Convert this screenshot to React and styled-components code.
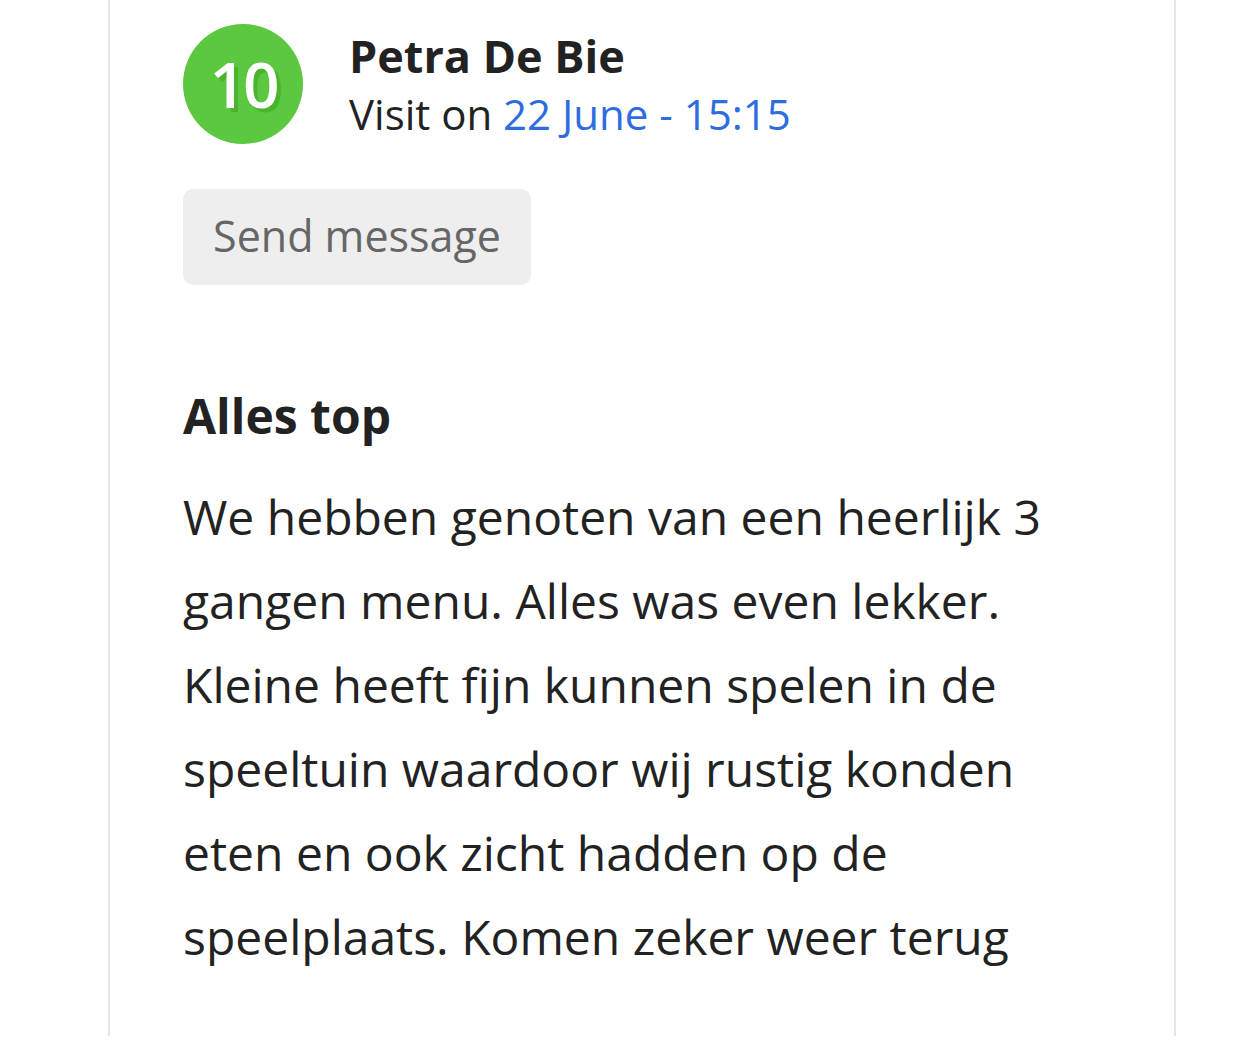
import React from "react";
import styled, { createGlobalStyle } from "styled-components";

const Global = createGlobalStyle`
  html, body { margin: 0; padding: 0; background: #fff; }
  body { font-family: "Open Sans", "Noto Sans", sans-serif; color: #222; }
`;

const Card = styled.div`
  box-sizing: border-box;
  margin-left: 108px;
  width: 1068px;
  height: 1036px;
  border-left: 2px solid #e6e6e6;
  border-right: 2px solid #e6e6e6;
  padding: 24px 0 0 73px;
`;

const Header = styled.div`
  display: flex;
  align-items: flex-start;
  gap: 46px;
`;

const Score = styled.div`
  width: 120px;
  height: 120px;
  border-radius: 50%;
  background: #5cc840;
  color: #fff;
  display: flex;
  align-items: center;
  justify-content: center;
  font-size: 64px;
  font-weight: 600;
  letter-spacing: -3px;
  text-shadow: 4px 4px 0 #4ab42e;
  flex-shrink: 0;
  padding-bottom: 2px;
  box-sizing: border-box;
`;

const Info = styled.div`
  display: flex;
  flex-direction: column;
  padding-top: 3px;
`;

const Name = styled.div`
  font-size: 45px;
  font-weight: 700;
  line-height: 58px;
  color: #222;
`;

const Visit = styled.div`
  font-size: 42px;
  line-height: 58px;
  color: #222;
`;

const DateLink = styled.span`
  color: #2d6de0;
`;

const Button = styled.button`
  margin-top: 45px;
  box-sizing: border-box;
  width: 348px;
  height: 96px;
  border: none;
  border-radius: 10px;
  background: #eeeeee;
  color: #666;
  font-family: inherit;
  font-size: 43px;
  padding: 0 0 4px;
`;

const Title = styled.h2`
  margin: 100px 0 0;
  font-size: 48px;
  font-weight: 700;
  line-height: 62px;
  color: #222;
`;

const Body = styled.p`
  margin: 28px 0 0;
  max-width: 900px;
  font-size: 48px;
  line-height: 84px;
  color: #222;
`;

export default function App() {
  return (
    <>
      <Global />
      <Card>
        <Header>
          <Score>10</Score>
          <Info>
            <Name>Petra De Bie</Name>
            <Visit>
              Visit on <DateLink>22 June - 15:15</DateLink>
            </Visit>
          </Info>
        </Header>
        <Button>Send message</Button>
        <Title>Alles top</Title>
        <Body>
          We hebben genoten van een heerlijk 3 gangen menu. Alles was even lekker.
          Kleine heeft fijn kunnen spelen in de speeltuin waardoor wij rustig konden
          eten en ook zicht hadden op de speelplaats. Komen zeker weer terug
        </Body>
      </Card>
    </>
  );
}
